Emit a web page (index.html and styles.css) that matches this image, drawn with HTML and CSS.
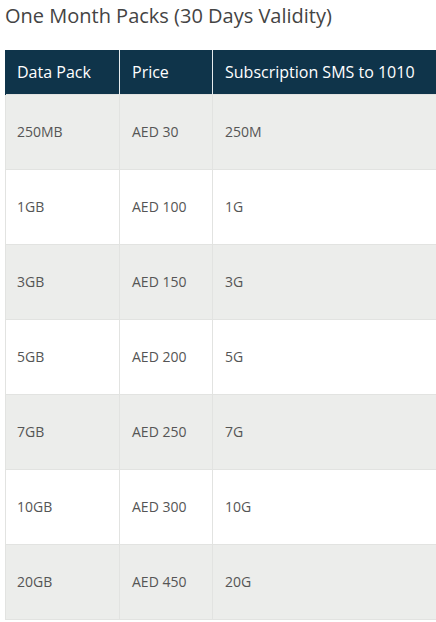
FILE: index.html
```html
<!DOCTYPE html>
<html>
<head>
<meta charset="utf-8">
<link rel="stylesheet" href="styles.css">
</head>
<body>
<div class="wrap">
  <h2 class="title">One Month Packs (30 Days Validity)</h2>
  <table class="packs">
    <colgroup>
      <col class="c1"><col class="c2"><col class="c3">
    </colgroup>
    <thead>
      <tr><th>Data Pack</th><th>Price</th><th>Subscription SMS to 1010</th></tr>
    </thead>
    <tbody>
      <tr><td>250MB</td><td>AED 30</td><td>250M</td></tr>
      <tr><td>1GB</td><td>AED 100</td><td>1G</td></tr>
      <tr><td>3GB</td><td>AED 150</td><td>3G</td></tr>
      <tr><td>5GB</td><td>AED 200</td><td>5G</td></tr>
      <tr><td>7GB</td><td>AED 250</td><td>7G</td></tr>
      <tr><td>10GB</td><td>AED 300</td><td>10G</td></tr>
      <tr><td>20GB</td><td>AED 450</td><td>20G</td></tr>
    </tbody>
  </table>
</div>
</body>
</html>
```
FILE: styles.css
```css
html, body {
  margin: 0;
  padding: 0;
  overflow: hidden;
  background: #ffffff;
}
body {
  font-family: "Open Sans", "Liberation Sans", sans-serif;
}
.wrap {
  padding: 0 0 0 5px;
}
.title {
  margin: 0;
  padding-top: 3px;
  font-size: 20px;
  font-weight: 400;
  line-height: 26px;
  color: #444444;
}
.packs {
  margin-top: 21px;
  border-collapse: collapse;
  table-layout: fixed;
  width: 450px;
}
.c1 { width: 114px; }
.c2 { width: 93px; }
.c3 { width: 243px; }
.packs th {
  background: #0f344a;
  color: #ffffff;
  font-size: 16px;
  font-weight: 400;
  line-height: 22px;
  text-align: left;
  padding: 11px 12px;
  border-left: 1px solid #e6ecef;
  white-space: nowrap;
}
.packs th:first-child {
  border-left: 1px solid #0f344a;
  padding-left: 11px;
}
.packs td {
  font-size: 14px;
  line-height: 20px;
  color: #555555;
  padding: 27px 12px;
  border: 1px solid #e2e3e1;
}
.packs td:first-child {
  padding-left: 11px;
}
.packs tbody tr:nth-child(odd) td {
  background: #ecedeb;
}
```
